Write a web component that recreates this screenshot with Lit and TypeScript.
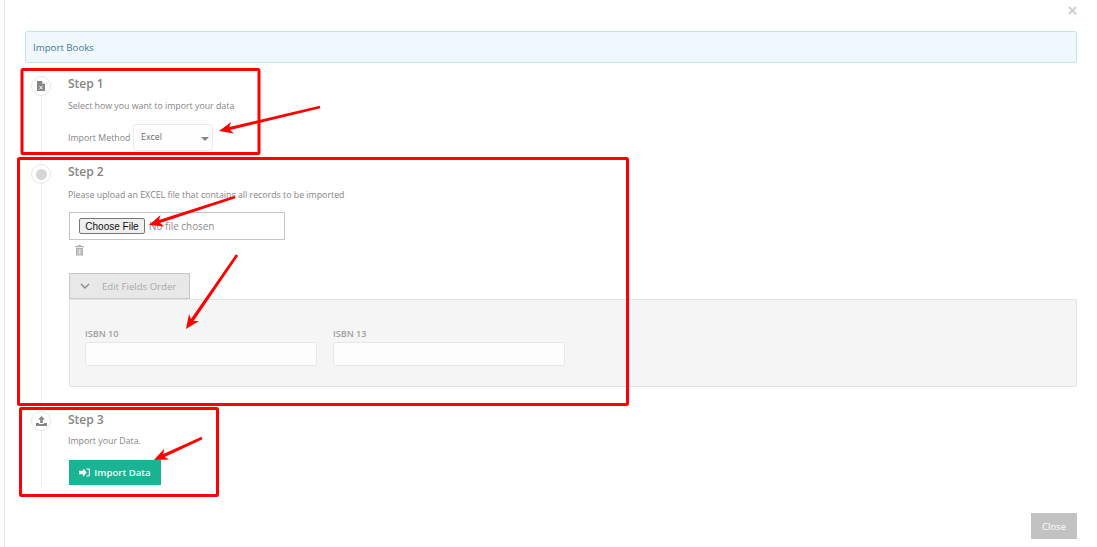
import { LitElement, html, css, svg } from "lit";
import { customElement } from "lit/decorators.js";

function arrow(x1: number, y1: number, x2: number, y2: number) {
  const dx = x2 - x1, dy = y2 - y1;
  const len = Math.hypot(dx, dy);
  const ux = dx / len, uy = dy / len;
  const nx = -uy, ny = ux;
  const hl = 14, hw = 6, sw = 1.6;
  const bx = x2 - ux * hl, by = y2 - uy * hl;
  const notchx = x2 - ux * (hl - 3), notchy = y2 - uy * (hl - 3);
  const pts = [
    [x1 + nx * sw * 0.8, y1 + ny * sw * 0.8],
    [notchx + nx * sw, notchy + ny * sw],
    [bx + nx * hw, by + ny * hw],
    [x2, y2],
    [bx - nx * hw, by - ny * hw],
    [notchx - nx * sw, notchy - ny * sw],
    [x1 - nx * sw * 0.8, y1 - ny * sw * 0.8],
  ];
  return svg`<polygon points=${pts.map((p) => p.map((v) => v.toFixed(1)).join(",")).join(" ")} fill="#f00"></polygon>`;
}

@customElement("app-root")
export class AppRoot extends LitElement {
  static styles = css`
    :host {
      display: block;
      position: relative;
      height: 547px;
      overflow: hidden;
      background: #fff;
      font-family: "Open Sans", sans-serif;
      font-size: 8.8px;
      color: #858585;
    }
    .modal {
      margin-left: 4px;
      height: 547px;
      box-sizing: border-box;
      border-left: 1px solid #e6e6e6;
      padding: 0 20px 0 20px;
      display: flex;
      flex-direction: column;
    }
    .top {
      height: 31px;
      display: flex;
      justify-content: flex-end;
      align-items: flex-start;
      padding-top: 5px;
      box-sizing: border-box;
    }
    .x {
      width: 9px;
      height: 9px;
      margin-top: 1px;
      color: #cfcfcf;
      display: block;
    }
    .alert {
      height: 32px;
      box-sizing: border-box;
      background: #f0f7fd;
      border: 1px solid #bce8f1;
      border-radius: 2px;
      color: #3f7b99;
      padding: 0 7px;
      font-size: 9.7px;
      line-height: 31px;
    }
    .steps {
      margin-top: 13px;
      display: flex;
      flex-direction: column;
    }
    .step {
      display: flex;
    }
    .rail {
      width: 32px;
      flex: none;
      margin-right: 11px;
      display: flex;
      flex-direction: column;
      align-items: center;
    }
    .dot {
      width: 20px;
      height: 20px;
      box-sizing: border-box;
      border: 1px solid #e7e7e7;
      border-radius: 50%;
      background: #fff;
      display: flex;
      align-items: center;
      justify-content: center;
      flex: none;
    }
    .dot svg {
      display: block;
    }
    .circle {
      width: 11px;
      height: 11px;
      border-radius: 50%;
      background: #d6d6d6;
    }
    .line {
      flex: 1;
      width: 1px;
      background: #f1f1f1;
    }
    .content {
      flex: 1;
      min-width: 0;
    }
    .s1 .content { padding-bottom: 13px; }
    .s2 .content { padding-bottom: 24px; }
    .s3 .content { padding-bottom: 3px; }
    .title {
      font-size: 12px;
      font-weight: 600;
      line-height: 16px;
      color: #858585;
    }
    .desc {
      line-height: 16px;
      margin-top: 6px;
    }
    .s2 .desc { margin-top: 7px; }
    .s3 .title { margin-top: 1px; }
    .s3 .desc { margin-top: 5px; }
    .method {
      margin-top: 10px;
      display: flex;
      align-items: center;
      gap: 2.7px;
    }
    .selwrap {
      position: relative;
      width: 80px;
      height: 27px;
    }
    select {
      appearance: none;
      width: 100%;
      height: 100%;
      box-sizing: border-box;
      border: 1px solid #ececec;
      border-radius: 3px;
      background: #fffdfd;
      font: 8.8px "Open Sans", sans-serif;
      color: #6a6a6a;
      padding: 0 7px 2px;
    }
    .selwrap::after {
      content: "";
      position: absolute;
      right: 4px;
      top: 13px;
      border-left: 4px solid transparent;
      border-right: 4px solid transparent;
      border-top: 4px solid #858585;
      pointer-events: none;
    }
    .filebox {
      margin: 9px 0 0 1px;
      width: 216px;
      height: 28px;
      box-sizing: border-box;
      border: 1px solid #c6c6c6;
      display: flex;
      align-items: center;
      padding-left: 9px;
    }
    input[type="file"] {
      font: 9.9px "Open Sans", sans-serif;
      color: #8c8c8c;
      width: 200px;
    }
    input[type="file"]::file-selector-button {
      font: 10px "Liberation Sans", Arial, sans-serif;
      width: 66px;
      height: 16px;
      padding: 0;
      margin-right: 4px;
      color: #111;
      background: #efefef;
      border: 1px solid #767676;
      border-radius: 2px;
    }
    .trash {
      display: block;
      margin: 4px 0 0 7px;
      color: #b0b0b0;
    }
    .edit {
      margin: 17px 0 0 1px;
      width: 121px;
      height: 26px;
      box-sizing: border-box;
      border: 1px solid #c8c8c8;
      background: #e8e8e8;
      display: flex;
      align-items: center;
      padding-left: 10px;
      gap: 12px;
      color: #a8a8a8;
      font-size: 9.6px;
      font-weight: 500;
    }
    .panel {
      margin-left: 1px;
      height: 88px;
      box-sizing: border-box;
      background: #f5f5f5;
      border: 1px solid #e3e3e3;
      border-radius: 2px;
      padding: 27px 15px 0;
      display: flex;
      gap: 16px;
    }
    .field {
      width: 232px;
    }
    .field label {
      display: block;
      font-size: 9px;
      font-weight: 600;
      line-height: 14px;
      color: #a0a0a0;
    }
    .field input {
      display: block;
      width: 100%;
      height: 24px;
      margin-top: 1px;
      box-sizing: border-box;
      border: 1px solid #e7e8ec;
      border-radius: 3px;
      background: #fdfdfd;
    }
    .import {
      margin: 11px 0 0 1px;
      width: 92px;
      height: 25px;
      border: 0;
      padding: 0;
      background: #1ab394;
      color: #f7fcfb;
      font: 600 9.6px "Open Sans", sans-serif;
      display: flex;
      align-items: center;
      justify-content: center;
      gap: 4px;
    }
    .foot {
      margin-top: 25px;
      display: flex;
      justify-content: flex-end;
    }
    .close {
      width: 46px;
      height: 26px;
      border: 0;
      padding: 0;
      background: #c2c2c2;
      color: #fff;
      font: 500 9.5px "Open Sans", sans-serif;
    }
    .marks {
      position: absolute;
      left: 0;
      top: 0;
      pointer-events: none;
    }
  `;

  render() {
    return html`
      <div class="modal">
        <div class="top">
          <svg class="x" viewBox="0 0 9 9"><path d="M1 1l7 7M8 1L1 8" stroke="currentColor" stroke-width="1.800" fill="none"></path></svg>
        </div>
        <div class="alert">Import Books</div>
        <div class="steps">
          <section class="step s1">
            <div class="rail">
              <div class="dot">
                <svg width="8" height="10" viewBox="0 0 8 10"><path fill="#858585" d="M0 0h5l3 3v7H0z"></path><path fill="#fff" d="M5 0l3 3H5z" opacity=".7"></path><path d="M2.400 4.800l3.200 3.600M5.600 4.800L2.400 8.400" stroke="#fff" stroke-width="1" fill="none"></path></svg>
              </div>
              <div class="line"></div>
            </div>
            <div class="content">
              <div class="title">Step 1</div>
              <div class="desc">Select how you want to import your data</div>
              <div class="method">
                <span>Import Method</span>
                <div class="selwrap"><select><option>Excel</option></select></div>
              </div>
            </div>
          </section>
          <section class="step s2">
            <div class="rail">
              <div class="dot"><div class="circle"></div></div>
              <div class="line"></div>
            </div>
            <div class="content">
              <div class="title">Step 2</div>
              <div class="desc">Please upload an EXCEL file that contains all records to be imported</div>
              <div class="filebox"><input type="file" /></div>
              <svg class="trash" width="9" height="12" viewBox="0 0 9 12"><path fill="currentColor" d="M3 1h3v1h3v1.200H0V2h3zM1 4h7v7.500H1z"></path><path d="M3 5v5.500M4.500 5v5.500M6 5v5.500" stroke="#fff" stroke-width=".6"></path></svg>
              <div class="edit">
                <svg width="10" height="6" viewBox="0 0 10 6"><path d="M1 1l4 4 4-4" stroke="#8a8a8a" stroke-width="1.400" fill="none"></path></svg>
                <span>Edit Fields Order</span>
              </div>
              <div class="panel">
                <div class="field"><label>ISBN 10</label><input /></div>
                <div class="field"><label>ISBN 13</label><input /></div>
              </div>
            </div>
          </section>
          <section class="step s3">
            <div class="rail">
              <div class="dot">
                <svg width="11" height="10" viewBox="0 0 11 10"><path fill="#858585" d="M5.500 0L9 3.600H6.800V7H4.200V3.600H2zM0 7h3.200v1h4.600V7H11v3H0z"></path></svg>
              </div>
              <div class="line"></div>
            </div>
            <div class="content">
              <div class="title">Step 3</div>
              <div class="desc">Import your Data.</div>
              <button class="import">
                <svg width="11" height="9" viewBox="0 0 12 9"><path fill="#fff" d="M4.500 0L8.500 4.500 4.500 9V6.500H0v-4h4.500z"></path><path d="M8 .7h2.300c.6 0 1 .4 1 1v5.600c0 .6-.4 1-1 1H8" stroke="#fff" stroke-width="1.200" fill="none"></path></svg>
                <span>Import Data</span>
              </button>
            </div>
          </section>
        </div>
        <div class="foot"><button class="close">Close</button></div>
      </div>
      <svg class="marks" width="1097" height="547" viewBox="0 0 1097 547">
        <g fill="none" stroke="#f00" stroke-width="3">
          <rect x="22" y="69.500" width="237" height="84" rx="1"></rect>
          <rect x="18.500" y="158.500" width="609" height="246" rx="1"></rect>
          <rect x="20.500" y="408.500" width="197" height="87" rx="1"></rect>
        </g>
        ${arrow(320, 107, 219, 131)}
        ${arrow(235, 197, 149, 225)}
        ${arrow(237, 255, 186, 329)}
        ${arrow(202, 438, 154, 460)}
      </svg>
    `;
  }
}
